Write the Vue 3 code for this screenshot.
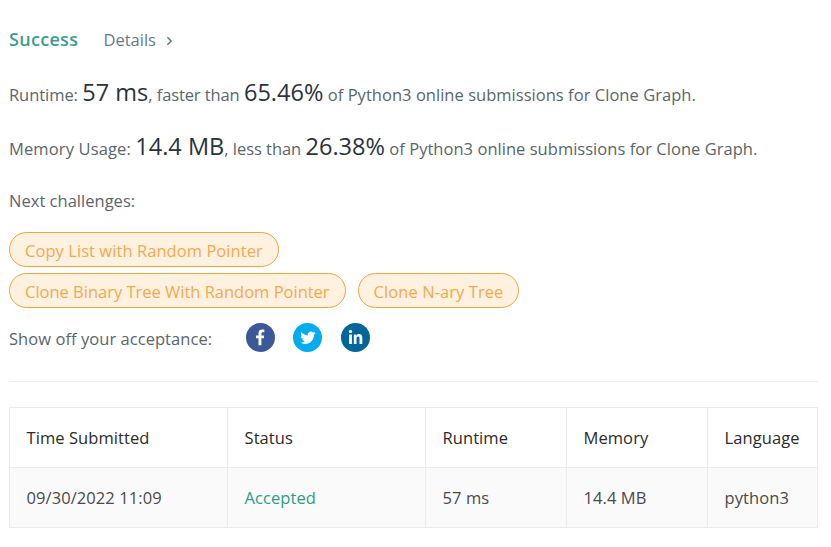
<script setup>
const stats = [
  { label: 'Runtime:', value: '57 ms', compare: ', faster than', percent: '65.46%' },
  { label: 'Memory Usage:', value: '14.4 MB', compare: ', less than', percent: '26.38%' },
]
const challenges = [
  'Copy List with Random Pointer',
  'Clone Binary Tree With Random Pointer',
  'Clone N-ary Tree',
]
const columns = ['Time Submitted', 'Status', 'Runtime', 'Memory', 'Language']
const submission = ['09/30/2022 11:09', 'Accepted', '57 ms', '14.4 MB', 'python3']
</script>

<template>
  <main class="result">
    <header class="head">
      <span class="success">Success</span>
      <a class="details">
        <span>Details</span>
        <svg class="chevron" width="7" height="10" viewBox="0 0 7 10"><path d="M1.4 1.2 5.2 5 1.4 8.8" /></svg>
      </a>
    </header>

    <p v-for="s in stats" :key="s.label" class="stat">
      <span class="label">{{ s.label }}</span>&#32;<span class="big">{{ s.value }}</span><span class="compare">{{ s.compare }}</span>&#32;<span class="big">{{ s.percent }}</span>&#32;<span>of Python3 online submissions for Clone Graph.</span>
    </p>

    <p class="next">Next challenges:</p>
    <div class="challenges">
      <a v-for="c in challenges" :key="c" class="pill">{{ c }}</a>
    </div>

    <div class="share">
      <span class="share-label">Show off your acceptance:</span>
      <svg class="social" viewBox="0 0 29 29">
        <circle cx="14.5" cy="14.5" r="14.5" fill="#3b5998" />
        <path fill="#fff" d="M12.5 22.3v-7.1H10v-2.8h2.5v-2.2c0-2.5 1.5-3.6 3.7-3.6 1 0 1.9.1 2.1.1v2.6h-1.5c-1.2 0-1.4.6-1.4 1.4v1.7h2.8l-.4 2.8h-2.4v7.1z" />
      </svg>
      <svg class="social twitter" viewBox="0 0 29 29">
        <circle cx="14.5" cy="14.5" r="14.5" fill="#00aced" />
        <path fill="#fff" transform="translate(7.2 7.1) scale(.64)" d="M23.95 4.57a10 10 0 0 1-2.82.77 4.96 4.96 0 0 0 2.16-2.72c-.95.55-2 .95-3.13 1.18a4.92 4.92 0 0 0-8.38 4.48C7.69 8.1 4.07 6.13 1.64 3.16a4.82 4.82 0 0 0-.67 2.48c0 1.71.87 3.21 2.19 4.1a4.9 4.9 0 0 1-2.23-.62v.06a4.92 4.92 0 0 0 3.95 4.83 5 5 0 0 1-2.21.08 4.94 4.94 0 0 0 4.6 3.42A9.87 9.87 0 0 1 0 19.54a14 14 0 0 0 7.55 2.21c9.05 0 14-7.5 14-13.98 0-.21 0-.42-.02-.63a9.94 9.94 0 0 0 2.46-2.55z" />
      </svg>
      <svg class="social" viewBox="0 0 29 29">
        <circle cx="14.5" cy="14.5" r="14.5" fill="#006699" />
        <path fill="#fff" d="M8.1 11.4h2.8V21H8.1zM12.8 11.4h2.6v1.3c.5-.9 1.4-1.6 2.7-1.6 2.4 0 3.2 1.5 3.2 4V21h-2.8v-5.3c0-1.3-.2-2.3-1.4-2.3s-1.6.9-1.6 2.2V21h-2.7z" />
        <circle cx="9.5" cy="8.4" r="1.65" fill="#fff" />
      </svg>
    </div>

    <hr class="rule" />

    <table class="submissions">
      <colgroup>
        <col class="wide" /><col class="status" /><col class="mid" /><col class="mid" /><col class="last" />
      </colgroup>
      <thead>
        <tr><th v-for="c in columns" :key="c">{{ c }}</th></tr>
      </thead>
      <tbody>
        <tr><td v-for="(v, i) in submission" :key="i" :class="{ accepted: v === 'Accepted' }">{{ v }}</td></tr>
      </tbody>
    </table>
  </main>
</template>

<style>
body { background: #fff; }
</style>

<style scoped>
.result {
  box-sizing: border-box;
  width: 831px;
  height: 547px;
  padding: 24px 13px 0 9px;
  overflow: hidden;
  background: #fff;
  color: #5a666b;
  font-family: "Open Sans", "Noto Sans", sans-serif;
  font-size: 16.5px;
  font-weight: 400;
  letter-spacing: 0.02px;
  line-height: 30px;
}
.head { display: flex; align-items: center; height: 30px; }
.success { width: 94.5px; color: #3a9e92; font-size: 18px; font-weight: 600; letter-spacing: 0.3px; }
.details { display: flex; align-items: center; gap: 10px; padding-top: 1px; color: #657b86; letter-spacing: 0; }
.chevron { margin-top: 2px; fill: none; stroke: #5f7681; stroke-width: 1.5; }
.stat { height: 54px; margin: 0; line-height: 54px; white-space: nowrap; word-spacing: 0.1px; }
.head + .stat { margin-top: 11px; }
.head + .stat .label { letter-spacing: -0.06px; }
.head + .stat .compare { letter-spacing: -0.12px; }
.stat + .stat .label { letter-spacing: 0.12px; }
.stat + .stat .compare { letter-spacing: -0.06px; }
.big { color: #2b333b; font-size: 23.5px; letter-spacing: 0; }
.next { margin: 13px 0 0; height: 30px; }
.challenges { display: flex; flex-wrap: wrap; gap: 6px 12px; width: 540px; margin-top: 16px; }
.pill {
  box-sizing: border-box;
  height: 35px;
  padding: 0 15px;
  border: 1px solid #efa53b;
  border-radius: 18px;
  background: #fff1df;
  color: #f4a94f;
  letter-spacing: -0.01px;
  line-height: 35px;
  white-space: nowrap;
}
.pill:first-child { margin-right: 200px; letter-spacing: 0.06px; }
.pill:last-child { letter-spacing: 0.07px; }
.share { display: flex; align-items: center; height: 29px; margin-top: 15px; }
.share-label { width: 237px; padding-top: 2px; letter-spacing: 0.05px; }
.social { width: 29px; height: 29px; margin-right: 18px; }
.twitter { margin-right: 19px; }
.rule { height: 1px; margin: 29px 0 25px; border: 0; background: #eee; }
.submissions { width: 809px; border-collapse: collapse; table-layout: fixed; }
.wide { width: 218px; }
.status { width: 198px; }
.mid { width: 141px; }
.last { width: 110px; }
th, td {
  box-sizing: border-box;
  height: 60px;
  padding: 0 0 0 16.5px;
  border: 1px solid #ebebeb;
  text-align: left;
  font-weight: 400;
  letter-spacing: 0.08px;
  white-space: nowrap;
}
th { color: #2b2b2b; }
td { background: #fafafa; color: #4a4a4a; }
td.accepted { color: #2f9a86; }
</style>
